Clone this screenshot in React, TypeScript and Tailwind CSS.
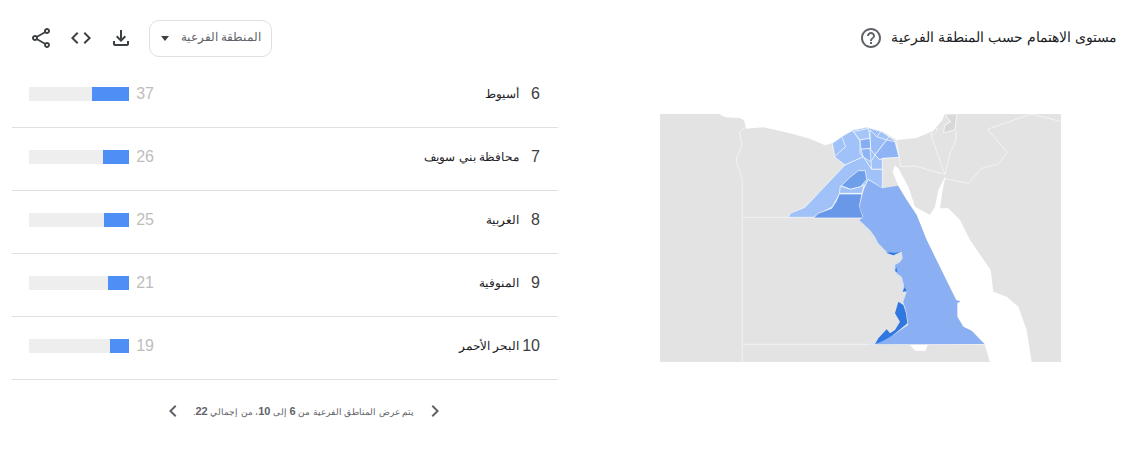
const regions = [
  { rank: 6, name: "أسيوط", value: 37 },
  { rank: 7, name: "محافظة بني سويف", value: 26 },
  { rank: 8, name: "الغربية", value: 25 },
  { rank: 9, name: "المنوفية", value: 21 },
  { rank: 10, name: "البحر الأحمر", value: 19 },
];

function MaterialIcon({ d, className }: { d: string; className: string }) {
  return (
    <svg viewBox="0 0 24 24" className={className} fill="currentColor">
      <path d={d} />
    </svg>
  );
}

function RegionMap() {
  return (
    <svg viewBox="30 42 1203 744" className="w-[401px] h-[248px] block">
      <defs>
        <pattern id="hatch" width="6" height="6" patternUnits="userSpaceOnUse" patternTransform="rotate(45)">
          <rect width="6" height="6" fill="#e3e3e3" />
          <rect width="2" height="6" fill="#c4c4c4" />
        </pattern>
      </defs>
      <rect x="30" y="42" width="1203" height="744" fill="#e3e3e3" />
      {/* sea */}
      <path
        fill="#fff"
        d="M208 42 L225 52 L270 54 L283 62 L288 86 L340 82 L420 100 L480 116 L525 136 L550 128 L580 106 L610 90 L650 82 L700 95 L740 120 L800 114 L850 92 L875 62 L885 42 Z"
      />
      <path
        fill="#fff"
        d="M735 196 L728 215 L745 258 L770 300 L800 345 L830 420 L920 600 L922 650 L940 680 L965 692 L1003 730 L1020 786 L1145 786 L1130 690 L1105 620 L1070 590 L1030 575 L1022 510 L960 420 L930 360 L895 325 L870 325 L878 270 L887 227 L865 270 L855 320 L840 345 L795 320 L775 260 L745 205 Z"
      />
      <path fill="#fff" d="M780 735 L833 735 L826 752 L796 752 Z" />
      {/* palestine */}
      <path fill="url(#hatch)" stroke="#fff" strokeWidth="2" d="M888 42 L920 42 L915 90 L880 98 L885 75 L902 65 L892 55 Z" />
      <path fill="url(#hatch)" stroke="#fff" strokeWidth="2" d="M843 102 L858 84 L862 90 L850 104 Z" />
      {/* neighbouring borders */}
      <g fill="none" stroke="#f5f5f5" strokeWidth="2.5">
        <path d="M283 84 L268 95 L276 135 L258 180 L277 240 L277 786" />
        <path d="M277 352 L415 352" />
        <path d="M277 733 L1003 733" />
        <path d="M842 102 L885 225 L900 160 L918 120 L918 92" />
        <path d="M1233 65 L1145 42 L1012 88 L1072 157 L1045 192 L995 205 L955 250 L885 236" />
        <path d="M750 200 L795 198 L880 222" />
        <path d="M740 120 L752 200" />
      </g>
      {/* delta: traced with its own origin */}
      <g transform="translate(525 60)" stroke="#fff" strokeWidth="2" strokeLinejoin="round">
        <path fill="#a1c2f8" d="M22 70 L50 50 L85 30 L125 22 L170 35 L210 62 L222 112 L172 115 L172 150 L140 148 L115 112 L60 135 L30 112 Z" />
        <path fill="none" d="M50 50 L62 80 L30 108" />
        <path fill="none" d="M85 35 L105 62 L105 100 L115 112" />
        <path fill="#a7c6f8" d="M85 35 L130 25 L135 55 L105 60 Z" />
        <path fill="#85adf3" d="M105 60 L135 55 L137 85 L108 88 Z" />
        <path fill="#8fb4f5" d="M108 88 L135 85 L138 125 L115 112 Z" />
        <path fill="#9bbdf7" d="M135 30 L155 50 L185 60 L150 105 L137 88 Z" />
        <path fill="#8fb4f5" d="M185 60 L210 65 L222 112 L172 115 L165 120 L150 105 Z" />
        <path fill="#a1c2f8" d="M138 125 L150 105 L165 120 L172 115 L172 148 L140 148 Z" />
        <path fill="none" d="M155 50 L168 35" />
        <path fill="none" d="M185 60 L195 45" />
      </g>
      {/* giza, fayoum, beni suef, minya */}
      <path
        fill="#a1c2f8"
        stroke="#fff"
        strokeWidth="2"
        d="M415 352 L420 340 L465 322 L585 195 L640 170 L665 208 L697 208 L697 265 L655 238 L640 265 L568 282 L548 320 L490 352 Z"
      />
      <path fill="#6f9eea" stroke="#fff" strokeWidth="2" d="M574 257 L600 232 L625 212 L646 212 L650 238 L632 260 L602 268 Z" />
      <path fill="#a1c2f8" stroke="#fff" strokeWidth="2" d="M571 258 L602 268 L632 260 L642 254 L636 280 L568 280 Z" />
      <path fill="#6898e7" stroke="#fff" strokeWidth="2" d="M568 282 L636 282 L628 318 L640 354 L490 354 L505 340 L545 325 L558 305 Z" />
      {/* red sea governorate */}
      <path
        fill="#8ab0f3"
        d="M697 265 L744 257 L770 300 L800 345 L830 420 L918 600 L932 604 L922 610 L922 650 L940 680 L965 692 L1003 732 L675 733 L730 705 L775 675 L770 640 L760 605 L772 570 L760 575 L762 555 L755 530 L740 520 L735 495 L750 487 L758 475 L755 455 L730 462 L710 455 L685 430 L675 410 L660 390 L628 360 L640 352 L628 320 L642 268 L655 240 Z"
      />
      <path
        fill="none"
        stroke="#d3e2fb"
        strokeWidth="3"
        d="M627 362 L640 380 L655 392 L668 412 L680 433 L706 458 L730 467 L752 460 L752 473 L745 483 L731 494 L736 522 L751 534 L758 556 L756 578 L756 605 L766 640 L771 672 L728 702 L672 731 L658 733"
      />
      <path fill="#3078e0" d="M675 733 L685 715 L710 688 L720 700 L735 690 L750 665 L735 640 L745 605 L760 615 L768 640 L772 670 L745 692 L725 708 L700 722 Z" />
      <path fill="#3078e0" d="M708 458 L730 466 L752 456 L732 459 L720 457 Z" />
      <path fill="#3078e0" d="M758 575 L764 562 L771 574 Z" />
      <path fill="#3078e0" d="M735 514 L738 500 L743 516 Z" />
    </svg>
  );
}

export default function App() {
  return (
    <div dir="rtl" className="w-[1143px] h-[465px] bg-white flex font-['Liberation_Sans','Noto_Sans',sans-serif] text-[#202124]">
      {/* map side */}
      <div className="w-[585px] flex flex-col">
        <div className="h-[76px] pr-[26px] flex items-center gap-[8px]">
          <h2 className="text-[14.3px] font-normal">مستوى الاهتمام حسب المنطقة الفرعية</h2>
          <MaterialIcon
            className="w-6 h-6 text-[#5f6368]"
            d="M11 18h2v-2h-2v2zm1-16C6.48 2 2 6.48 2 12s4.48 10 10 10 10-4.48 10-10S17.52 2 12 2zm0 18c-4.41 0-8-3.59-8-8s3.59-8 8-8 8 3.59 8 8-3.59 8-8 8zm0-14c-2.21 0-4 1.79-4 4h2c0-1.1.9-2 2-2s2 .9 2 2c0 2-3 1.75-3 5h2c0-2.25 3-2.5 3-5 0-2.21-1.79-4-4-4z"
          />
        </div>
        <div className="pt-[38px] pr-[82px]">
          <RegionMap />
        </div>
      </div>

      {/* list side */}
      <div className="w-[558px] pl-[12px] flex flex-col">
        <div className="h-[76px] flex items-center justify-end gap-[16px] pl-[17px] text-[#3c4043]">
          <div className="flex items-center w-[123px] h-[37px] border border-[#e0e0e0] rounded-[10px] pr-[10px] pl-[11px] justify-between text-[#5f6368]">
            <span className="text-[11.5px]">المنطقة الفرعية</span>
            <span className="w-0 h-0 border-x-[4px] border-x-transparent border-t-[5px] border-t-[#3c4043]" />
          </div>
          <MaterialIcon className="w-6 h-6" d="M18 15v3H6v-3H4v3c0 1.1.9 2 2 2h12c1.1 0 2-.9 2-2v-3h-2zm-1-4l-1.41-1.41L13 12.17V4h-2v8.17L8.41 9.59 7 11l5 5 5-5z" />
          <MaterialIcon className="w-6 h-6" d="M9.4 16.6L4.8 12l4.6-4.6L8 6l-6 6 6 6 1.4-1.4zm5.2 0l4.6-4.6-4.6-4.6L16 6l6 6-6 6-1.4-1.4z" />
          <MaterialIcon className="w-6 h-6" d="M18 16.08c-.76 0-1.44.3-1.96.77L8.91 12.7c.05-.23.09-.46.09-.7s-.04-.47-.09-.7l7.05-4.11c.54.5 1.25.81 2.04.81 1.66 0 3-1.34 3-3s-1.34-3-3-3-3 1.34-3 3c0 .24.04.47.09.7L8.04 9.81C7.5 9.31 6.79 9 6 9c-1.66 0-3 1.34-3 3s1.34 3 3 3c.79 0 1.5-.31 2.04-.81l7.12 4.16c-.05.21-.08.43-.08.65 0 1.61 1.31 2.92 2.92 2.92s2.92-1.31 2.92-2.92-1.31-2.92-2.92-2.92zM18 4c.55 0 1 .45 1 1s-.45 1-1 1-1-.45-1-1 .45-1 1-1zM6 13c-.55 0-1-.45-1-1s.45-1 1-1 1 .45 1 1-.45 1-1 1zm12 7.02c-.55 0-1-.45-1-1s.45-1 1-1 1 .45 1 1-.45 1-1 1z" />
        </div>

        <div className="-mt-[12px] pt-px">
          {regions.map((r) => (
            <div key={r.rank} className="h-[63px] border-b border-[#e0e0e0] flex items-center pr-[18px] pb-[4px]">
              <span className="w-[19px] shrink-0 text-[16px] text-[#3c4043] text-right" dir="ltr">{r.rank}</span>
              <span className="mr-[2px] text-[12px] text-[#202124]">{r.name}</span>
              <div className="mr-auto flex items-center gap-[7px] pl-[17px]">
                <span className="text-[16px] text-[#bdbdbd] w-[18px]">{r.value}</span>
                <div className="w-[100px] h-[14px] bg-[#eeeeee] flex">
                  <div className="h-full bg-[#4d8ff5]" style={{ width: `${r.value}%` }} />
                </div>
              </div>
            </div>
          ))}
        </div>

        <div className="mt-[19px] flex items-center justify-center gap-[8px] text-[#5f6368] pl-[37px]">
          <MaterialIcon className="w-6 h-6" d="M8.59 16.59L10 18l6-6-6-6-1.41 1.41L13.17 12z" />
          <span className="text-[9px] whitespace-nowrap w-[222px] text-center">يتم عرض المناطق الفرعية من <b className="text-[11px]">6</b> إلى <b className="text-[11px]">10</b>، من إجمالي <b className="text-[11px]">22</b>.</span>
          <MaterialIcon className="w-6 h-6" d="M15.41 7.41L14 6l-6 6 6 6 1.41-1.41L10.83 12z" />
        </div>
      </div>
    </div>
  );
}
